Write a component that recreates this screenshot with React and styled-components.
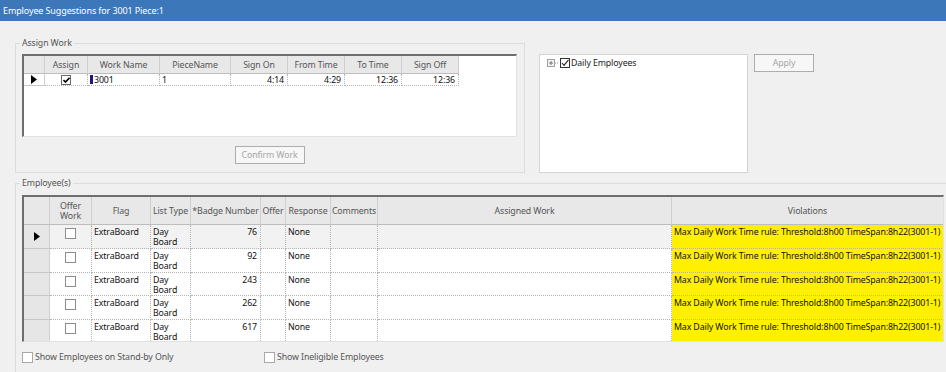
import styled, { createGlobalStyle } from "styled-components"

const Global = createGlobalStyle`
*{ box-sizing:border-box; }
body{
  margin:0;
  background:#f0f0f0;
  font-family:"Noto Sans","Open Sans",sans-serif;
  font-size:8.8px;
  letter-spacing:-0.12px;
  color:#1a1a1a;
}
`

const Window = styled.div`
width:946px;
height:372px;
overflow:hidden;
background:#f0f0f0;
`

const TitleBar = styled.div`
height:21px;
background:#3c77b9;
color:#fff;
font-size:9px;
display:flex;
align-items:center;
padding-left:3px;
`

const Content = styled.div`
padding-top:16px;
padding-left:15px;
`

const TopRow = styled.div`
display:flex;
align-items:flex-start;
`

const Group = styled.fieldset`
margin:0;
border:1px solid #dcdcdc;
padding:${p => p.$pad || "5px 7px 8px 6px"};
width:${p => p.$w}px;
min-width:0;
display:flex;
flex-direction:column;
`

const Legend = styled.legend`
font-size:8.8px;
line-height:12px;
color:#555;
padding:0 2px;
margin-left:-2px;
`

const Grid = styled.div`
background:#fff;
border-top:2px solid #6e6e6e;
border-left:2px solid #6e6e6e;
border-right:1px solid #e2e2e2;
border-bottom:1px solid #e2e2e2;
width:${p => (p.$w ? p.$w + "px" : "auto")};
height:${p => p.$h}px;
overflow:hidden;
`

const Table = styled.table`
border-collapse:separate;
border-spacing:0;
table-layout:fixed;
width:${p => p.$w}px;
`

const Th = styled.th`
background:#e8e8e8;
color:#555;
font-weight:normal;
font-size:8.8px;
line-height:10px;
text-align:center;
white-space:nowrap;
overflow:hidden;
border-right:1px solid #cfcfcf;
border-bottom:1px solid #bdbdbd;
padding:0;
height:${p => p.$h}px;
`

const Td = styled.td`
border-right:1px dotted #b4b4b4;
border-bottom:1px dotted #b4b4b4;
text-align:${p => p.$align || "left"};
vertical-align:${p => p.$valign || "top"};
padding:${p => p.$pad || "1px 3px 0 2px"};
line-height:10px;
font-size:8.8px;
color:#111;
white-space:nowrap;
overflow:hidden;
background:${p => p.$bg || "transparent"};
`

const RowHead = styled.td`
background:${p => p.$bg || "#e6e6e6"};
border-right:1px solid #cfcfcf;
border-bottom:1px solid #c8c8c8;
vertical-align:middle;
text-align:center;
padding:0;
`

const Tr = styled.tr`
height:${p => p.$h}px;
background:${p => (p.$current ? "#f2f2f2" : "#fff")};
`

const WorkMark = styled.span`
display:inline-block;
width:3px;
height:9px;
background:#1c1c78;
vertical-align:-1px;
margin-right:1px;
`

const Box = styled.span`
display:inline-block;
flex-shrink:0;
width:${p => p.$s}px;
height:${p => p.$s}px;
border:1px solid ${p => p.$border || "#8c8c8c"};
background:#fff;
position:relative;
vertical-align:middle;
`

const Button = styled.div`
width:${p => p.$w}px;
height:18px;
border:1px solid #adadad;
background:#f7f7f7;
color:#a6a6a6;
font-size:8.8px;
display:flex;
align-items:center;
justify-content:center;
`

const ButtonRow = styled.div`
display:flex;
justify-content:center;
margin-top:9px;
`

const Tree = styled.div`
width:209px;
height:119px;
margin:17px 0 0 14px;
background:#fff;
border:1px solid #d4d4d4;
padding:3px 0 0 7px;
`

const TreeItem = styled.div`
display:flex;
align-items:center;
gap:1px;
color:#222;
line-height:10px;
`

const ApplyWrap = styled.div`
margin:17px 0 0 6px;
`

const BottomGroupWrap = styled.div`
margin-top:4px;
`

const Footer = styled.div`
display:flex;
align-items:center;
margin-top:9px;
color:#555;
`

const FooterItem = styled.label`
display:flex;
align-items:center;
gap:2px;
width:${p => (p.$w ? p.$w + "px" : "auto")};
`

const Multi = styled.span`
white-space:pre-line;
`

const Arrow = () => (
  <svg width="6" height="9" viewBox="0 0 6 9" style={{ display: "block", margin: "0 auto" }}>
    <path d="M0 0 L6 4.5 L0 9 Z" fill="#000" />
  </svg>
)

const Check = () => (
  <svg width="7" height="6" viewBox="0 0 7 6" style={{ position: "absolute", left: 0.5, top: 1 }}>
    <path d="M0.5 3 L2.5 5 L6.5 0.8" stroke="#000" strokeWidth="1.6" fill="none" />
  </svg>
)

const TreeCheck = () => (
  <svg width="10" height="10" viewBox="0 0 10 10" style={{ display: "block" }}>
    <rect x="0.5" y="0.5" width="9" height="9" fill="#fff" stroke="#333" />
    <path d="M2 5 L4 7.3 L8.5 1.8" stroke="#222" strokeWidth="1.1" fill="none" />
  </svg>
)

const Expander = () => (
  <svg width="12" height="9" viewBox="0 0 12 9" style={{ display: "block" }}>
    <rect x="0.5" y="0.5" width="7" height="7" fill="#f4f4f4" stroke="#a0a0a0" />
    <path d="M2 4 H6 M4 2 V6" stroke="#777" strokeWidth="1" />
    <path d="M8 4 H12" stroke="#a0a0a0" strokeWidth="1" strokeDasharray="1 1" />
  </svg>
)

const workCols = [21, 43, 72, 71, 57, 57, 57, 57]
const workHeads = ["", "Assign", "Work Name", "PieceName", "Sign On", "From Time", "To Time", "Sign Off"]

const empCols = [26, 42, 59, 40, 70, 25, 45, 47, 294, 272]
const empHeads = ["", "Offer\nWork", "Flag", "List Type", "*Badge Number", "Offer", "Response", "Comments", "Assigned Work", "Violations"]

const employees = [
  { badge: 76, h: 24 },
  { badge: 92, h: 24 },
  { badge: 243, h: 23 },
  { badge: 262, h: 24 },
  { badge: 617, h: 23 },
]

const violation = "Max Daily Work Time rule: Threshold:8h00 TimeSpan:8h22(3001-1)"

export default function App() {
  return (
    <Window>
      <Global />
      <TitleBar>Employee Suggestions for 3001 Piece:1</TitleBar>
      <Content>
        <TopRow>
          <Group $w={510}>
            <Legend>Assign Work</Legend>
            <Grid $h={83}>
              <Table $w={435}>
                <colgroup>
                  {workCols.map((w, i) => <col key={i} style={{ width: w }} />)}
                </colgroup>
                <thead>
                  <tr>
                    {workHeads.map((h, i) => <Th key={i} $h={18}>{h}</Th>)}
                  </tr>
                </thead>
                <tbody>
                  <Tr $h={12}>
                    <RowHead $bg="#fff"><Arrow /></RowHead>
                    <Td $align="center" $valign="middle" $pad="0">
                      <Box $s={10} $border="#6a6a6a"><Check /></Box>
                    </Td>
                    <Td><WorkMark />3001</Td>
                    <Td>1</Td>
                    <Td $align="right">4:14</Td>
                    <Td $align="right">4:29</Td>
                    <Td $align="right">12:36</Td>
                    <Td $align="right">12:36</Td>
                  </Tr>
                </tbody>
              </Table>
            </Grid>
            <ButtonRow>
              <Button $w={70}>Confirm Work</Button>
            </ButtonRow>
          </Group>
          <Tree>
            <TreeItem>
              <Expander />
              <TreeCheck />
              <span>Daily Employees</span>
            </TreeItem>
          </Tree>
          <ApplyWrap>
            <Button $w={60}>Apply</Button>
          </ApplyWrap>
        </TopRow>

        <BottomGroupWrap>
          <Group $w={945} $pad="6px 7px 20px 6px">
            <Legend>Employee(s)</Legend>
            <Grid $h={147} $w={922}>
              <Table $w={919}>
                <colgroup>
                  {empCols.map((w, i) => <col key={i} style={{ width: w }} />)}
                </colgroup>
                <thead>
                  <tr>
                    {empHeads.map((h, i) => (
                      <Th key={i} $h={28}><Multi>{h}</Multi></Th>
                    ))}
                  </tr>
                </thead>
                <tbody>
                  {employees.map((e, i) => (
                    <Tr key={e.badge} $h={e.h} $current={i === 0}>
                      <RowHead>{i === 0 && <Arrow />}</RowHead>
                      <Td $align="center" $pad="3px 0 0 0">
                        <Box $s={11} />
                      </Td>
                      <Td $pad="2px 3px 0 2px">ExtraBoard</Td>
                      <Td $pad="2px 3px 0 2px"><Multi>{"Day\nBoard"}</Multi></Td>
                      <Td $align="right" $pad="2px 3px 0 2px">{e.badge}</Td>
                      <Td />
                      <Td $pad="2px 3px 0 2px">None</Td>
                      <Td />
                      <Td />
                      <Td $bg="#fff000" $pad="2px 0 0 2px">{violation}</Td>
                    </Tr>
                  ))}
                </tbody>
              </Table>
            </Grid>
            <Footer>
              <FooterItem $w={242}>
                <Box $s={11} $border="#a8a8a8" />
                Show Employees on Stand-by Only
              </FooterItem>
              <FooterItem>
                <Box $s={11} $border="#a8a8a8" />
                Show Ineligible Employees
              </FooterItem>
            </Footer>
          </Group>
        </BottomGroupWrap>
      </Content>
    </Window>
  )
}
